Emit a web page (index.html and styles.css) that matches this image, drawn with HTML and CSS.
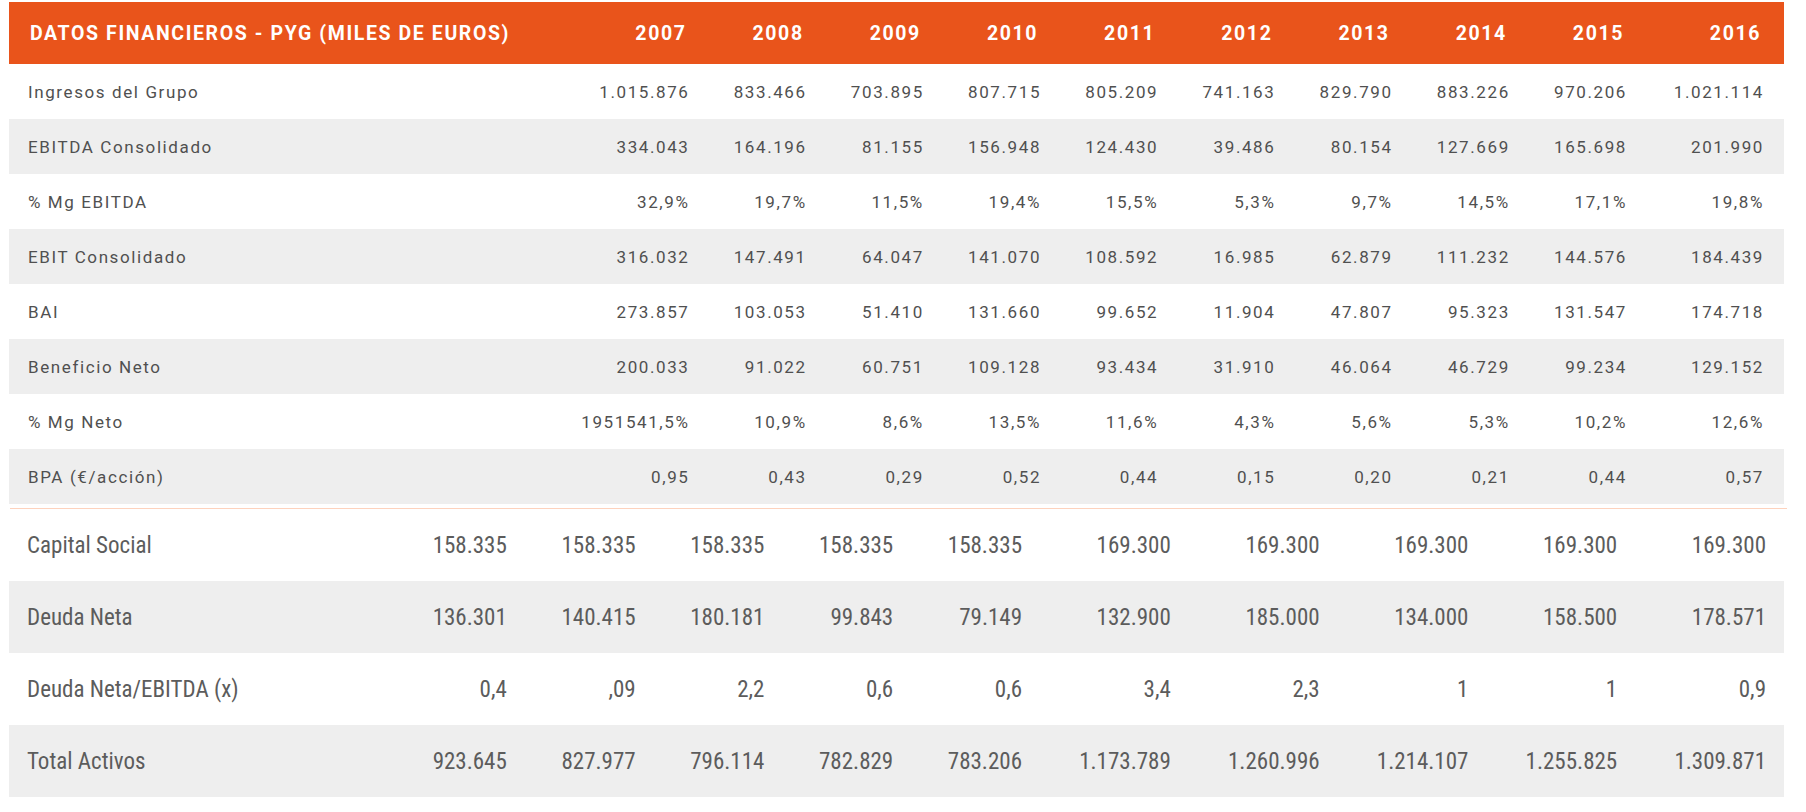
FILE: index.html
```html
<!DOCTYPE html>
<html lang="es">
<head>
<meta charset="utf-8">
<title>Datos financieros</title>
<link rel="stylesheet" href="styles.css">
</head>
<body>
<div class="wrap">
  <div class="pyg">
    <div class="row head">
      <div class="label">DATOS FINANCIEROS - PYG (MILES DE EUROS)</div>
      <div>2007</div><div>2008</div><div>2009</div><div>2010</div><div>2011</div><div>2012</div><div>2013</div><div>2014</div><div>2015</div><div>2016</div>
    </div>
    <div class="row">
      <div class="label">Ingresos del Grupo</div>
      <div>1.015.876</div><div>833.466</div><div>703.895</div><div>807.715</div><div>805.209</div><div>741.163</div><div>829.790</div><div>883.226</div><div>970.206</div><div>1.021.114</div>
    </div>
    <div class="row alt">
      <div class="label">EBITDA Consolidado</div>
      <div>334.043</div><div>164.196</div><div>81.155</div><div>156.948</div><div>124.430</div><div>39.486</div><div>80.154</div><div>127.669</div><div>165.698</div><div>201.990</div>
    </div>
    <div class="row">
      <div class="label">% Mg EBITDA</div>
      <div>32,9%</div><div>19,7%</div><div>11,5%</div><div>19,4%</div><div>15,5%</div><div>5,3%</div><div>9,7%</div><div>14,5%</div><div>17,1%</div><div>19,8%</div>
    </div>
    <div class="row alt">
      <div class="label">EBIT Consolidado</div>
      <div>316.032</div><div>147.491</div><div>64.047</div><div>141.070</div><div>108.592</div><div>16.985</div><div>62.879</div><div>111.232</div><div>144.576</div><div>184.439</div>
    </div>
    <div class="row">
      <div class="label">BAI</div>
      <div>273.857</div><div>103.053</div><div>51.410</div><div>131.660</div><div>99.652</div><div>11.904</div><div>47.807</div><div>95.323</div><div>131.547</div><div>174.718</div>
    </div>
    <div class="row alt">
      <div class="label">Beneficio Neto</div>
      <div>200.033</div><div>91.022</div><div>60.751</div><div>109.128</div><div>93.434</div><div>31.910</div><div>46.064</div><div>46.729</div><div>99.234</div><div>129.152</div>
    </div>
    <div class="row">
      <div class="label">% Mg Neto</div>
      <div>1951541,5%</div><div>10,9%</div><div>8,6%</div><div>13,5%</div><div>11,6%</div><div>4,3%</div><div>5,6%</div><div>5,3%</div><div>10,2%</div><div>12,6%</div>
    </div>
    <div class="row alt">
      <div class="label">BPA (€/acción)</div>
      <div>0,95</div><div>0,43</div><div>0,29</div><div>0,52</div><div>0,44</div><div>0,15</div><div>0,20</div><div>0,21</div><div>0,44</div><div>0,57</div>
    </div>
  </div>
  <div class="sep"></div>
  <div class="bal">
    <div class="brow">
      <div class="label">Capital Social</div>
      <div>158.335</div><div>158.335</div><div>158.335</div><div>158.335</div><div>158.335</div><div>169.300</div><div>169.300</div><div>169.300</div><div>169.300</div><div>169.300</div>
    </div>
    <div class="brow alt">
      <div class="label">Deuda Neta</div>
      <div>136.301</div><div>140.415</div><div>180.181</div><div>99.843</div><div>79.149</div><div>132.900</div><div>185.000</div><div>134.000</div><div>158.500</div><div>178.571</div>
    </div>
    <div class="brow">
      <div class="label">Deuda Neta/EBITDA (x)</div>
      <div>0,4</div><div>,09</div><div>2,2</div><div>0,6</div><div>0,6</div><div>3,4</div><div>2,3</div><div>1</div><div>1</div><div>0,9</div>
    </div>
    <div class="brow alt">
      <div class="label">Total Activos</div>
      <div>923.645</div><div>827.977</div><div>796.114</div><div>782.829</div><div>783.206</div><div>1.173.789</div><div>1.260.996</div><div>1.214.107</div><div>1.255.825</div><div>1.309.871</div>
    </div>
  </div>
</div>
</body>
</html>
```
FILE: styles.css
```css
html, body {
  margin: 0;
  padding: 0;
  background: #ffffff;
}

.wrap {
  padding: 2px 0 0 9px;
  width: 1775px;
}

.row {
  display: grid;
  grid-template-columns: 1fr repeat(9, 117.2px) 137px;
  height: 55px;
  align-items: center;
  font-family: Roboto, "Liberation Sans", sans-serif;
  font-size: 17px;
  letter-spacing: 1.6px;
  color: #505050;
  background: #ffffff;
}

.row > div {
  display: flex;
  justify-content: flex-end;
  padding-right: 20px;
  white-space: nowrap;
  min-width: 0;
}

.row > .label {
  justify-content: flex-start;
  padding-left: 19px;
  padding-right: 0;
}

.row.alt {
  background: #eeeeee;
}

.row.head {
  height: 62px;
  background: #e9541b;
  color: #ffffff;
  font-weight: 700;
  font-size: 19.5px;
  letter-spacing: 1.6px;
}

.row.head > div {
  padding-right: 23px;
}

.row.head > .label {
  padding-left: 21px;
  padding-right: 0;
}

.sep {
  margin: 4px 0 0 1px;
  width: 1777px;
  height: 1px;
  background: #fdd2bd;
}

.brow {
  display: grid;
  grid-template-columns: 1fr repeat(5, 128.8px) repeat(5, 148.8px);
  height: 72px;
  align-items: center;
  font-family: Roboto, "Liberation Sans", sans-serif;
  font-stretch: 75%;
  font-size: 23px;
  color: #5c5c5c;
  background: #ffffff;
}

.brow > div {
  display: flex;
  justify-content: flex-end;
  padding-right: 18px;
  white-space: nowrap;
  min-width: 0;
}

.brow > .label {
  justify-content: flex-start;
  padding-left: 18px;
  padding-right: 0;
}

.brow.alt {
  background: #eeeeee;
}
```
